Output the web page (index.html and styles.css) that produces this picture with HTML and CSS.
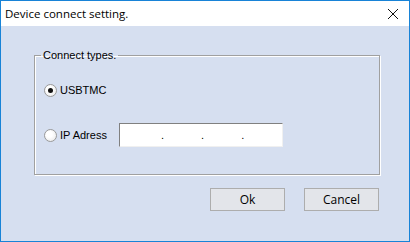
FILE: index.html
```html
<!DOCTYPE html>
<html lang="en">
<head>
    <meta charset="UTF-8">
    <title>Device connect setting.</title>
    <link rel="stylesheet" href="styles.css">
</head>
<body>
    <div class="window">
        <div class="titlebar">
            <span class="title">Device connect setting.</span>
            <button class="close">
                <svg width="12" height="12" viewBox="0 0 12 12">
                    <path d="M1 1 L11 11 M11 1 L1 11" stroke="#111" stroke-width="1" fill="none"/>
                </svg>
            </button>
        </div>

        <div class="content">
            <fieldset class="group">
                <legend>Connect types.</legend>

                <div class="row first">
                    <span class="radio checked"></span>
                    <span class="label">USBTMC</span>
                </div>

                <div class="row second">
                    <span class="radio"></span>
                    <span class="label ip">IP Adress</span>
                    <div class="ipbox">
                        <span>.</span><span>.</span><span>.</span>
                    </div>
                </div>
            </fieldset>

            <div class="buttons">
                <button class="btn">Ok</button>
                <button class="btn">Cancel</button>
            </div>
        </div>
    </div>
</body>
</html>
```

FILE: styles.css
```css
*{
    margin: 0;
    padding: 0;
    box-sizing: border-box;
}

body{
    background: #d6dff0;
    font-family: "Liberation Sans", Arial, sans-serif;
}

.window{
    width: 410px;
    height: 242px;
    border: 1px solid #1883d7;
    background: #d6dff0;
    display: flex;
    flex-direction: column;
}

.titlebar{
    height: 25px;
    background: #fff;
    display: flex;
    align-items: center;
    justify-content: space-between;
    padding-left: 4px;
}

.title{
    font-family: "Open Sans", sans-serif;
    font-size: 11.5px;
    color: #000;
}

.close{
    border: 0;
    background: transparent;
    width: 32px;
    height: 25px;
    display: flex;
    align-items: center;
    justify-content: center;
}

.content{
    flex: 1;
}

.group{
    margin: 22px 0 0 33px;
    width: 346px;
    border: 1px solid #a0a0a0;
    box-shadow: inset 1px 1px 0 #fff, 1px 1px 0 #fff;
    padding: 0 0 27px 9px;
}

.group legend{
    margin-left: -3px;
    padding: 0 2px;
    font-size: 11px;
    line-height: 14px;
    color: #000;
}

.row{
    display: flex;
    align-items: center;
    font-size: 11px;
    color: #000;
}

.row.first{
    margin-top: 21px;
    height: 14px;
}

.row.second{
    margin-top: 26px;
    height: 24px;
}

.radio{
    width: 13px;
    height: 13px;
    border-radius: 50%;
    border: 1px solid #9a9a9a;
    background: radial-gradient(circle at 40% 40%, #fff 30%, #e4e4e4 100%);
    display: flex;
    align-items: center;
    justify-content: center;
    margin-right: 3px;
}

.radio.checked::after{
    content: "";
    width: 5px;
    height: 5px;
    border-radius: 50%;
    background: #111;
}

.label.ip{
    width: 59px;
}

.ipbox{
    width: 164px;
    height: 24px;
    background: #fff;
    border-top: 1px solid #808080;
    border-left: 1px solid #808080;
    border-right: 1px solid #f0f0f0;
    border-bottom: 1px solid #f0f0f0;
    display: flex;
    align-items: center;
    padding-left: 41px;
    gap: 37px;
    font-size: 11px;
    line-height: 1;
}

.buttons{
    display: flex;
    justify-content: flex-end;
    gap: 19px;
    margin-top: 13px;
    padding-right: 30px;
}

.btn{
    width: 75px;
    height: 23px;
    border: 1px solid #adadad;
    background: #e3e5ea;
    font-family: "Open Sans", sans-serif;
    font-size: 12px;
    color: #000;
}
```
